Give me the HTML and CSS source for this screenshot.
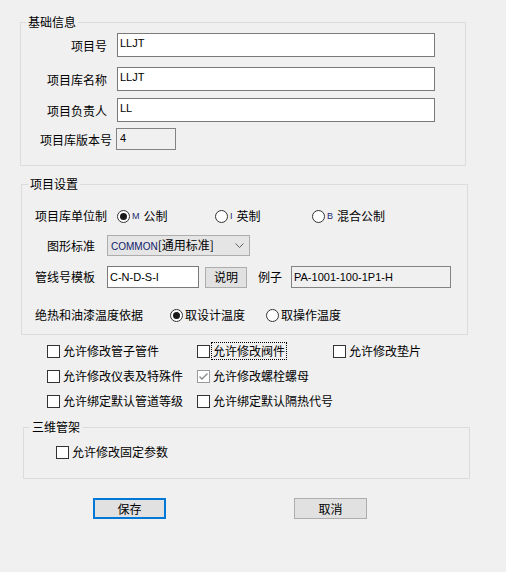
FILE: index.html
```html
<!DOCTYPE html>
<html lang="zh-CN">
<head>
    <meta charset="UTF-8">
    <title>项目设置</title>
    <link rel="stylesheet" href="styles.css">
</head>
<body>

<div class="dialog">

    <fieldset class="group group-basic">
        <legend>基础信息</legend>
        <div class="field-row">
            <span class="field-label">项目号</span>
            <div class="edit edit-wide">LLJT</div>
        </div>
        <div class="field-row row-name">
            <span class="field-label">项目库名称</span>
            <div class="edit edit-wide">LLJT</div>
        </div>
        <div class="field-row">
            <span class="field-label">项目负责人</span>
            <div class="edit edit-wide">LL</div>
        </div>
        <div class="field-row row-version">
            <span class="field-label">项目库版本号</span>
            <div class="edit edit-readonly edit-version">4</div>
        </div>
    </fieldset>

    <fieldset class="group group-settings">
        <legend>项目设置</legend>

        <div class="set-row row-unit">
            <span class="unit-label">项目库单位制</span>
            <label class="radio radio-m"><span class="radio-dot checked"></span><span class="radio-key">M</span>公制</label>
            <label class="radio radio-i"><span class="radio-dot"></span><span class="radio-key">I</span>英制</label>
            <label class="radio"><span class="radio-dot"></span><span class="radio-key">B</span>混合公制</label>
        </div>

        <div class="set-row row-std">
            <span class="short-label">图形标准</span>
            <div class="combo">
                <span class="combo-text"><span class="latin">COMMON</span>[通用标准]</span>
                <svg class="combo-arrow" width="9" height="5" viewBox="0 0 9 5"><polyline points="0.5,0.5 4.5,4.5 8.5,0.5" fill="none" stroke="#606060" stroke-width="1"/></svg>
            </div>
        </div>

        <div class="set-row row-template">
            <span class="short-label">管线号模板</span>
            <div class="edit edit-template">C-N-D-S-I</div>
            <button class="btn btn-small">说明</button>
            <span class="example-label">例子</span>
            <div class="edit edit-readonly edit-example">PA-1001-100-1P1-H</div>
        </div>

        <div class="set-row row-temp">
            <span class="temp-label">绝热和油漆温度依据</span>
            <label class="radio radio-design"><span class="radio-dot checked"></span>取设计温度</label>
            <label class="radio"><span class="radio-dot"></span>取操作温度</label>
        </div>
    </fieldset>

    <div class="options">
        <label class="check"><span class="check-box"></span>允许修改管子管件</label>
        <label class="check"><span class="check-box"></span><span class="focus">允许修改阀件</span></label>
        <label class="check"><span class="check-box"></span>允许修改垫片</label>
        <label class="check"><span class="check-box"></span>允许修改仪表及特殊件</label>
        <label class="check"><span class="check-box checked">
            <svg width="11" height="11" viewBox="0 0 11 11"><polyline points="1.5,5.5 4,8 9.5,2.5" fill="none" stroke="#8a8a8a" stroke-width="1.4"/></svg>
        </span>允许修改螺栓螺母</label>
        <span></span>
        <label class="check"><span class="check-box"></span>允许绑定默认管道等级</label>
        <label class="check"><span class="check-box"></span>允许绑定默认隔热代号</label>
    </div>

    <fieldset class="group group-support">
        <legend>三维管架</legend>
        <label class="check check-support"><span class="check-box"></span>允许修改固定参数</label>
    </fieldset>

    <div class="actions">
        <button class="btn btn-main btn-default">保存</button>
        <button class="btn btn-main">取消</button>
    </div>

</div>

</body>
</html>
```

FILE: styles.css
```css
* {
    box-sizing: border-box;
}
html {
    background: #f0f0f0;
}
body {
    margin: 0;
    font-family: "Noto Sans CJK SC", "Microsoft YaHei", sans-serif;
    font-size: 12px;
    line-height: 16px;
    color: #000;
}
.dialog {
    width: 506px;
    height: 572px;
    padding-top: 14px;
}

/* group boxes */
.group {
    margin: 0;
    border: 1px solid #dcdcdc;
    min-width: 0;
}
.group legend {
    padding: 0 2px;
    line-height: 16px;
    font-size: 12px;
}
.group-basic {
    margin-left: 20px;
    width: 446px;
    padding: 3px 0 15px 5px;
}
.group-settings {
    margin: 10px 0 0 21px;
    width: 447px;
    padding: 14px 0 9px 6px;
}
.group-support {
    margin: 8px 0 0 23px;
    width: 447px;
    padding: 7px 0 16px 6px;
}

/* basic info rows */
.field-row {
    display: flex;
    align-items: center;
    gap: 10px;
}
.field-row + .field-row {
    margin-top: 7px;
}
.field-row.row-name {
    margin-top: 10px;
}
.field-row.row-version {
    margin-top: 6px;
    gap: 4px;
}
.field-label {
    width: 81px;
    text-align: right;
    padding-top: 2px;
}
.row-version .field-label {
    width: 86px;
}
.edit {
    height: 24px;
    border: 1px solid #7a7a7a;
    background: #fff;
    padding: 2px 2px 0;
    font-family: "Liberation Sans", Arial, sans-serif;
    font-size: 11px;
    line-height: 15px;
}
.edit-wide {
    width: 318px;
}
.edit-readonly {
    background: #f0f0f0;
    border-color: #838383;
}
.edit-version {
    width: 60px;
    height: 22px;
    padding-left: 3px;
}

/* project settings rows */
.set-row {
    display: flex;
    align-items: center;
    padding-left: 7px;
}
.row-unit {
    height: 20px;
}
.row-std {
    margin-top: 9px;
    height: 21px;
}
.row-template {
    margin-top: 10px;
    height: 22px;
}
.row-temp {
    margin-top: 17px;
    height: 20px;
}
.unit-label {
    width: 82px;
}
.short-label {
    width: 60px;
    margin-right: 12px;
    text-align: right;
}
.temp-label {
    width: 135px;
}

.radio {
    display: flex;
    align-items: center;
}
.radio-m {
    width: 98px;
}
.radio-i {
    width: 97px;
}
.radio-design {
    width: 96px;
}
.radio-dot {
    width: 13px;
    height: 13px;
    border: 1px solid #333;
    border-radius: 50%;
    background: #fff;
    margin-right: 2px;
    position: relative;
}
.radio-dot.checked::after {
    content: "";
    position: absolute;
    left: 2px;
    top: 2px;
    width: 7px;
    height: 7px;
    border-radius: 50%;
    background: #1a1a1a;
}
.radio-key {
    font-family: "Liberation Sans", Arial, sans-serif;
    font-size: 9px;
    color: #1c2a6e;
    margin-right: 4px;
}

.combo {
    width: 143px;
    height: 21px;
    border: 1px solid #adadad;
    background: #e5e5e5;
    display: flex;
    align-items: center;
    justify-content: space-between;
    padding: 0 3px 0 3px;
}
.combo-text {
    font-size: 12px;
}
.latin {
    font-family: "Liberation Sans", Arial, sans-serif;
    font-size: 10px;
    color: #10206a;
}
.combo-arrow {
    margin-right: 2px;
}

.edit-template {
    width: 92px;
    height: 22px;
    padding-top: 3px;
}
.btn {
    font-family: "Noto Sans CJK SC", "Microsoft YaHei", sans-serif;
    font-size: 12px;
    line-height: 16px;
    color: #000;
    background: #e1e1e1;
    border: 1px solid #adadad;
    padding: 0;
}
.btn-small {
    width: 42px;
    height: 21px;
    margin-left: 6px;
}
.example-label {
    margin-left: 11px;
    margin-right: 9px;
}
.edit-example {
    width: 160px;
    height: 22px;
    padding-top: 3px;
}

/* check options */
.options {
    margin-top: 6px;
    padding-left: 47px;
    display: grid;
    grid-template-columns: 150px 136px auto;
    grid-auto-rows: 20px;
    row-gap: 5px;
}
.check {
    display: flex;
    align-items: center;
}
.check-box {
    width: 13px;
    height: 13px;
    border: 1px solid #333;
    background: #fff;
    margin-right: 3px;
    display: flex;
    align-items: center;
    justify-content: center;
}
.check-box.checked {
    border-color: #9a9a9a;
}
.focus {
    outline: 1px dotted #000;
    outline-offset: 0;
    padding: 0 1px;
    margin-left: -1px;
}
.check-support {
    height: 20px;
    margin-left: 26px;
}

/* bottom buttons */
.actions {
    margin-top: 19px;
    padding-left: 93px;
    display: flex;
    gap: 128px;
}
.btn-main {
    width: 73px;
    height: 21px;
}
.btn-default {
    border: 2px solid #0078d7;
}
```
